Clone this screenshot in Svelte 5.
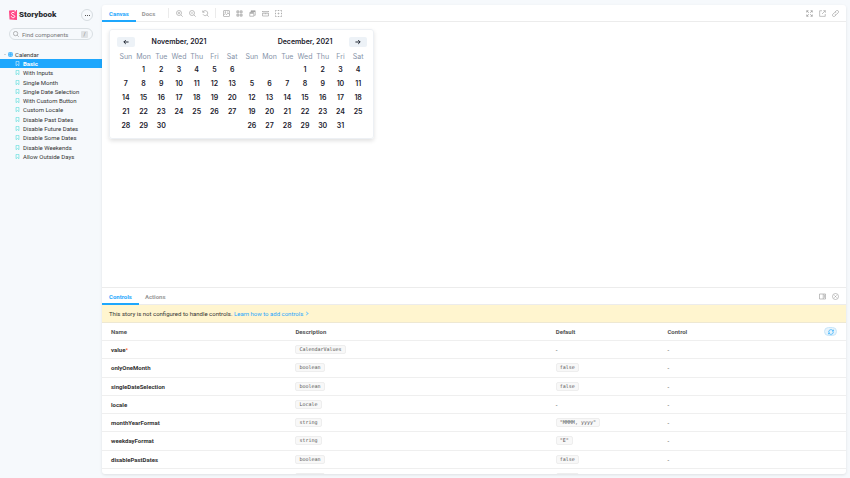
<script>
  const stories = ['Basic', 'With Inputs', 'Single Month', 'Single Date Selection', 'With Custom Button', 'Custom Locale', 'Disable Past Dates', 'Disable Future Dates', 'Disable Some Dates', 'Disable Weekends', 'Allow Outside Days'];
  const weekdays = ['Sun', 'Mon', 'Tue', 'Wed', 'Thu', 'Fri', 'Sat'];
  const months = [
    { name: 'November, 2021', offset: 1, days: 30 },
    { name: 'December, 2021', offset: 3, days: 31 }
  ];
  const args = [
    { name: 'value', required: true, type: 'CalendarValues', def: null },
    { name: 'onlyOneMonth', type: 'boolean', def: 'false' },
    { name: 'singleDateSelection', type: 'boolean', def: 'false' },
    { name: 'locale', type: 'Locale', def: null },
    { name: 'monthYearFormat', type: 'string', def: '"MMMM, yyyy"' },
    { name: 'weekdayFormat', type: 'string', def: '"E"' },
    { name: 'disablePastDates', type: 'boolean', def: 'false' },
    { name: 'disableFutureDates', type: 'boolean', def: 'false' }
  ];
  let current = $state('Basic');
  let query = $state('');
</script>

{#snippet icon(name)}
  <svg class="icon" viewBox="0 0 14 14" fill="none" stroke="currentColor" stroke-width="1.2" aria-hidden="true">
    {#if name === 'zoomin'}
      <circle cx="6" cy="6" r="5" /><path d="M9.7 9.7 13.4 13.4M6 3.8v4.4M3.8 6h4.4" />
    {:else if name === 'zoomout'}
      <circle cx="6" cy="6" r="5" /><path d="M9.7 9.7 13.4 13.4M3.8 6h4.4" />
    {:else if name === 'zoomreset'}
      <path d="M1.5 1v3.6h3.6M1.8 4.4A5 5 0 1 1 2 8.6M9.9 9.9l3.5 3.5" />
    {:else if name === 'photo'}
      <rect x="1" y="1" width="12" height="12" rx="1" /><path d="M1 10.5 4.5 7l2.5 2.5L10 6l3 3" /><circle cx="4.6" cy="4.2" r="1" /><path d="M8 4h3" />
    {:else if name === 'grid'}
      <path d="M1.7 1.7h4v4h-4zM8.3 1.7h4v4h-4zM1.7 8.3h4v4h-4zM8.3 8.3h4v4h-4z" fill="currentColor" fill-opacity=".35" />
    {:else if name === 'viewport'}
      <path d="M4 4V1.5h8.5v9H10M1.5 5h8v7.5h-8z" /><path d="M2 6.2h7M4 2.7h8" stroke-width="2" />
    {:else if name === 'measure'}
      <path d="M1 6h12v6H1zM4 6v2.5M7 6v2.5M10 6v2.5M1 2v2M13 2v2M1 3h12" />
    {:else if name === 'outline'}
      <path d="M1 3V1h2M5.5 1h3M11 1h2v2M13 5.5v3M13 11v2h-2M8.5 13h-3M3 13H1v-2M1 8.5v-3" stroke-width="1.6" /><path d="M5 7h4M7 5v4" stroke-width="1" />
    {:else if name === 'expand'}
      <path d="M1.5 5V1.5H5M9 1.5h3.5V5M12.5 9v3.5H9M5 12.5H1.5V9M1.5 1.5l4 4M12.5 1.5l-4 4M12.5 12.5l-4-4M1.5 12.5l4-4" stroke-width="1.5" />
    {:else if name === 'share'}
      <path d="M6 1.5H1.3v11.2h11.2V8M8.5 1.3h4.2v4.2M12.5 1.5 6 8" />
    {:else if name === 'link'}
      <path d="m6 4 2.3-2.3a2.7 2.7 0 0 1 4 4L9.5 8.5a2.7 2.7 0 0 1-4 0M8 10l-2.3 2.3a2.7 2.7 0 0 1-4-4l2.8-2.8a2.7 2.7 0 0 1 4 0" />
    {:else if name === 'sidebar'}
      <path d="M1 2h12v10H1zM8.5 2v10M10 4.5h2M10 6.5h2M10 8.5h2" />
    {:else if name === 'close'}
      <circle cx="7" cy="7" r="6" /><path d="m4.8 4.8 4.4 4.4M9.2 4.8 4.8 9.2" />
    {:else if name === 'sync'}
      <path d="M1.5 7A5.5 5.5 0 0 1 11 3.2L12.5 5M12.5 7A5.5 5.5 0 0 1 3 10.8L1.5 9M12.6 1.6V5H9.3M1.4 12.4V9h3.3" stroke-width="1.5" />
    {:else if name === 'search'}
      <circle cx="6" cy="6" r="5" /><path d="m9.7 9.7 3.7 3.7" />
    {:else if name === 'bookmark'}
      <path d="M3 1h8v12L7 10l-4 3z" stroke-width="1.5" />
    {:else if name === 'left'}
      <path d="M13 7H2M6.5 2.5 2 7l4.5 4.5" stroke-width="2.2" />
    {:else if name === 'right'}
      <path d="M1 7h11M7.5 2.5 12 7l-4.5 4.5" stroke-width="2.2" />
    {:else if name === 'component'}
      <rect x="1" y="1" width="12" height="12" rx="4" fill="currentColor" fill-opacity=".6" /><path d="M7 1v12M1 7h12" />
    {/if}
  </svg>
{/snippet}

{#snippet tool(name, label)}
  <button class="tool" aria-label={label}>{@render icon(name)}</button>
{/snippet}

<div class="app">
  <aside>
    <header class="brand">
      <svg class="mark" viewBox="0 0 16 20" aria-hidden="true">
        <path d="M1 1.2 15 .2q1 0 1 1v17.6q0 1-1 1L2 19.2q-1 0-1-1L0 2.2q0-.9 1-1z" fill="#ff4785" />
        <path d="M11.3 0h2.4v3.3l-1.2-.9-1.2.9z" fill="#fff" />
        <path d="M11 6.5C10.5 4 5 4 5 7c0 3.5 6.5 2.3 6.5 6 0 3.3-6.700 3.3-7-.5" fill="none" stroke="#fff" stroke-width="2" />
      </svg>
      <strong>Storybook</strong>
      <button class="more" aria-label="Shortcuts"><i></i><i></i><i></i></button>
    </header>
    <label class="search">
      {@render icon('search')}
      <input type="text" placeholder="Find components" aria-label="Find components" bind:value={query} />
      <kbd>/</kbd>
    </label>
    <nav>
      <a class="group" href="#calendar"><span class="caret"></span>{@render icon('component')}Calendar</a>
      <ul>
        {#each stories as story}
          <li>
            <a class="story" class:selected={story === current} href="#{story}" onclick={() => (current = story)}>{@render icon('bookmark')}{story}</a>
          </li>
        {/each}
      </ul>
    </nav>
  </aside>

  <main>
    <div class="bar">
      <button class="tab active">Canvas</button>
      <button class="tab">Docs</button>
      <span class="rule"></span>
      <div class="tools">
        {@render tool('zoomin', 'Zoom in')}
        {@render tool('zoomout', 'Zoom out')}
        {@render tool('zoomreset', 'Reset zoom')}
      </div>
      <span class="rule"></span>
      <div class="tools">
        {@render tool('photo', 'Background')}
        {@render tool('grid', 'Grid')}
        {@render tool('viewport', 'Viewport')}
        {@render tool('measure', 'Measure')}
        {@render tool('outline', 'Outline')}
      </div>
      <div class="tools end">
        {@render tool('expand', 'Full screen')}
        {@render tool('share', 'Open in new tab')}
        {@render tool('link', 'Copy link')}
      </div>
    </div>

    <section class="canvas">
      <div class="calendar">
        {#each months as month, m}
          <div class="month">
            <div class="title">
              {#if m === 0}<button class="arrow prev" aria-label="Previous month">{@render icon('left')}</button>{/if}
              <h2>{month.name}</h2>
              {#if m === 1}<button class="arrow next" aria-label="Next month">{@render icon('right')}</button>{/if}
            </div>
            <div class="days names">
              {#each weekdays as d}<span>{d}</span>{/each}
            </div>
            <div class="days">
              {#each { length: month.offset } as _}<span></span>{/each}
              {#each { length: month.days } as _, i}<button>{i + 1}</button>{/each}
            </div>
          </div>
        {/each}
      </div>
    </section>

    <section class="addons">
      <div class="bar">
        <button class="tab active">Controls</button>
        <button class="tab">Actions</button>
        <div class="tools end">
          {@render tool('sidebar', 'Change orientation')}
          {@render tool('close', 'Hide addons')}
        </div>
      </div>
      <p class="notice">This story is not configured to handle controls. <a href="#docs">Learn how to add controls <span class="chev"></span></a></p>
      <div class="scroll">
        <table>
          <colgroup><col class="name" /><col class="desc" /><col class="def" /><col /></colgroup>
          <thead>
            <tr>
              <th>Name</th>
              <th>Description</th>
              <th>Default</th>
              <th><div class="last">Control <button class="reset" aria-label="Reset controls">{@render icon('sync')}</button></div></th>
            </tr>
          </thead>
          <tbody>
            {#each args as arg}
              <tr>
                <td><b>{arg.name}</b>{#if arg.required}<span class="req">*</span>{/if}</td>
                <td><code>{arg.type}</code></td>
                <td>{#if arg.def}<code>{arg.def}</code>{:else}-{/if}</td>
                <td>-</td>
              </tr>
            {/each}
          </tbody>
        </table>
      </div>
    </section>
  </main>
</div>

<style>
  :global(body) { background: #f6f9fc; }
  .app {
    display: flex;
    height: 100vh;
    overflow: hidden;
    box-sizing: border-box;
    padding: 5px 4px 4px 0;
    font-family: Roboto, "Liberation Sans", sans-serif;
    font-size: 6px;
    line-height: 9px;
    color: #333;
  }
  button {
    border: 0;
    padding: 0;
    background: none;
    font: inherit;
    color: inherit;
    cursor: pointer;
  }
  a { color: inherit; text-decoration: none; }
  .icon { display: block; width: 7px; height: 7px; flex: none; }

  aside { flex: none; width: 102px; }
  .brand { display: flex; align-items: center; height: 20px; padding: 0 9px; }
  .mark { width: 8px; height: 10px; margin-right: 2px; }
  .brand strong { font-size: 8px; line-height: 12px; font-weight: 900; color: #2b2f33; }
  .more {
    display: flex;
    align-items: center;
    justify-content: center;
    gap: 1px;
    width: 12px;
    height: 12px;
    box-sizing: border-box;
    margin-left: auto;
    border: 1px solid #d7dde1;
    border-radius: 50%;
  }
  .more i { width: 1px; height: 1px; background: #555; }
  .search {
    display: flex;
    align-items: center;
    height: 12px;
    box-sizing: border-box;
    margin: 3px 9px 0;
    padding: 0 4px 0 3px;
    border: 1px solid #d9dfe3;
    border-radius: 6px;
    color: #777;
  }
  .search .icon { width: 6px; height: 6px; }
  .search input {
    flex: 1;
    min-width: 0;
    margin: 0 0 0 3px;
    padding: 0;
    border: 0;
    outline: 0;
    background: none;
    font: inherit;
    color: #333;
  }
  .search input::placeholder { color: #777; opacity: 1; }
  kbd {
    width: 7px;
    height: 7px;
    border-radius: 1px;
    background: #dfe2e5;
    font: 5px/7px Roboto, sans-serif;
    text-align: center;
  }
  nav { margin-top: 10px; }
  .group { display: flex; align-items: center; height: 9px; padding-left: 4px; }
  .group .icon { width: 5px; height: 5px; margin: 0 2px 0 2px; color: #1ea7fd; }
  .caret { border: 1px solid transparent; border-top-color: #aaa; }
  ul { display: grid; grid-auto-rows: 1fr; height: 102px; margin: 0; padding: 0; list-style: none; }
  .story { display: flex; align-items: center; height: 100%; padding-left: 15px; white-space: nowrap; }
  .story .icon { width: 5px; height: 5px; margin-right: 3px; color: #37d5d3; }
  .story.selected { background: #1ea7fd; color: #fff; font-weight: 700; }
  .story.selected .icon { color: #fff; }

  main {
    display: flex;
    flex-direction: column;
    flex: 1;
    min-width: 0;
    overflow: hidden;
    border-radius: 3px;
    background: #fff;
    box-shadow: 0 1px 3px rgba(0, 0, 0, .1);
  }
  .bar {
    display: flex;
    flex: none;
    align-items: center;
    height: 17px;
    box-sizing: border-box;
    padding-right: 7px;
    border-bottom: 1px solid #ececec;
    color: #999;
  }
  .tab {
    height: 17px;
    box-sizing: border-box;
    padding: 2px 7px 0;
    border-bottom: 2px solid transparent;
    font-weight: 700;
  }
  .tab + .tab { padding-left: 6px; }
  .tab.active { border-color: #1ea7fd; color: #1ea7fd; }
  .rule { width: 1px; height: 10px; margin: 0 7px 0 6px; background: #ebebeb; }
  .tools { display: flex; gap: 6px; }
  .end { margin-left: auto; }

  .canvas { flex: 1; min-height: 0; overflow: auto; padding: 7px; }
  .calendar {
    display: flex;
    gap: 2px;
    width: max-content;
    padding: 7px 6px 6px 7px;
    border: 1px solid #edf0f4;
    box-sizing: border-box;
    border-radius: 3px;
    box-shadow: 0 2px 4px rgba(0, 0, 0, .12);
    font-family: Inter, "Liberation Sans", sans-serif;
    font-size: 7px;
    color: #1a202c;
  }
  .month { width: 124px; }
  .title { display: grid; grid-template-columns: 18px 1fr 18px; align-items: center; height: 10px; }
  h2 { grid-column: 2; grid-row: 1; margin: 0; font-size: 7px; line-height: 10px; font-weight: 600; text-align: center; }
  .arrow {
    display: flex;
    align-items: center;
    justify-content: center;
    height: 10px;
    border-radius: 2px;
    background: #edf2f7;
  }
  .next { grid-column: 3; }
  .arrow .icon { width: 6px; height: 6px; }
  .days {
    display: grid;
    grid-template-columns: repeat(7, 1fr);
    grid-auto-rows: 14px;
    font-weight: 600;
    text-align: center;
  }
  .names { grid-auto-rows: 10px; margin-top: 5px; line-height: 10px; font-weight: 400; color: #8593a8; }

  .addons {
    display: flex;
    flex-direction: column;
    flex: none;
    height: 186px;
    border-top: 1px solid #ececec;
  }
  .notice {
    flex: none;
    margin: 0;
    padding: 4px 7px;
    border-bottom: 1px solid #eee8d2;
    background: #fff5cf;
  }
  .notice a { color: #1ea7fd; }
  .chev {
    display: inline-block;
    width: 3px;
    height: 3px;
    box-sizing: border-box;
    border: solid #7cc9f8;
    border-width: 1px 1px 0 0;
    transform: rotate(45deg);
    vertical-align: 1px;
  }
  .scroll { flex: 1; min-height: 0; overflow-y: auto; scrollbar-width: none; }
  table { width: 100%; height: 164px; border-collapse: collapse; table-layout: fixed; }
  th, td { height: 17px; padding: 0; border-bottom: 1px solid #efefef; text-align: left; vertical-align: middle; }
  th:first-child, td:first-child { padding-left: 9px; }
  th { font-weight: 700; color: #555; }
  td b { font-weight: 700; }
  .name { width: 26%; }
  .desc { width: 35%; }
  .def { width: 15%; }
  .req { color: #ff4400; }
  code {
    display: block;
    width: max-content;
    padding: 0 3px;
    border: 1px solid #eee;
    border-radius: 2px;
    background: #f8f8f8;
    font: 5px/7px "DejaVu Sans Mono", monospace;
    color: #555;
  }
  .last { display: flex; align-items: center; justify-content: space-between; padding-right: 9px; }
  .reset {
    display: flex;
    align-items: center;
    justify-content: center;
    width: 13px;
    height: 9px;
    box-sizing: border-box;
    border: 1px solid #c9e6f9;
    border-radius: 5px;
    background: #e8f4fc;
    color: #1ea7fd;
  }
  .reset .icon { width: 6px; height: 6px; }
</style>
